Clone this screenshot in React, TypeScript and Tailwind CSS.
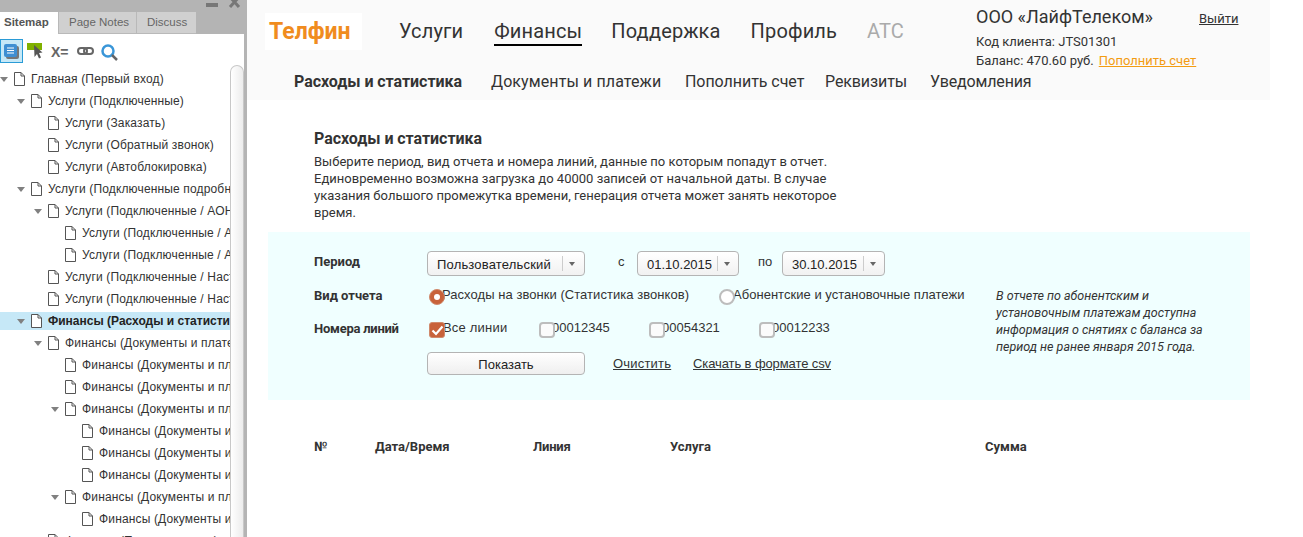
const tree: { depth: number; label: string; arrow?: boolean; active?: boolean }[] = [
  { depth: 0, label: 'Главная (Первый вход)', arrow: true },
  { depth: 1, label: 'Услуги (Подключенные)', arrow: true },
  { depth: 2, label: 'Услуги (Заказать)' },
  { depth: 2, label: 'Услуги (Обратный звонок)' },
  { depth: 2, label: 'Услуги (Автоблокировка)' },
  { depth: 1, label: 'Услуги (Подключенные подробно)', arrow: true },
  { depth: 2, label: 'Услуги (Подключенные / АОН)', arrow: true },
  { depth: 3, label: 'Услуги (Подключенные / АОН / Заказ)' },
  { depth: 3, label: 'Услуги (Подключенные / АОН / Отказ)' },
  { depth: 2, label: 'Услуги (Подключенные / Настройка)' },
  { depth: 2, label: 'Услуги (Подключенные / Настройка 2)' },
  { depth: 1, label: 'Финансы (Расходы и статистика)', arrow: true, active: true },
  { depth: 2, label: 'Финансы (Документы и платежи)', arrow: true },
  { depth: 3, label: 'Финансы (Документы и платежи 1)' },
  { depth: 3, label: 'Финансы (Документы и платежи 2)' },
  { depth: 3, label: 'Финансы (Документы и платежи 3)', arrow: true },
  { depth: 4, label: 'Финансы (Документы и платежи 4)' },
  { depth: 4, label: 'Финансы (Документы и платежи 5)' },
  { depth: 4, label: 'Финансы (Документы и платежи 6)' },
  { depth: 3, label: 'Финансы (Документы и платежи 7)', arrow: true },
  { depth: 4, label: 'Финансы (Документы и платежи 8)' },
  { depth: 2, label: 'Финансы (Пополнить счет)' },
]

const depthPad = ['pl-0', 'pl-[17px]', 'pl-[34px]', 'pl-[51px]', 'pl-[68px]']

function PageIcon() {
  return (
    <svg width="11" height="14" viewBox="0 0 11 14" className="shrink-0">
      <path d="M.5 .5H7L10.5 4V13.5H.5Z" fill="#fff" stroke="#555" strokeWidth="1" />
      <path d="M7 .5V4H10.5" fill="none" stroke="#555" strokeWidth="1" />
    </svg>
  )
}

function TreeRow({ depth, label, arrow, active }: { depth: number; label: string; arrow?: boolean; active?: boolean }) {
  return (
    <div className={`flex h-[18px] mb-1 items-center whitespace-nowrap ${depthPad[depth]} ${active ? 'bg-[#c6e8f7] font-bold text-[#222]' : 'text-[#333] tracking-[0.15px]'}`}>
      <span className="w-[14px] shrink-0 flex">
        {arrow && <span className="w-0 h-0 border-x-[4.5px] border-x-transparent border-t-[5px] border-t-[#808080] mt-[1px]" />}
      </span>
      <PageIcon />
      <span className="ml-[6px]">{label}</span>
    </div>
  )
}

function Sidebar() {
  return (
    <aside className="w-[247px] h-full shrink-0 bg-[#b4b4b4] flex flex-col pr-[3px] font-['Liberation_Sans',sans-serif] text-[12px]">
      <div className="h-[12px] relative shrink-0">
        <span className="absolute left-[206px] top-[3px] w-[12px] h-[4px] bg-[#777]" />
        <svg className="absolute left-[228px] top-0" width="13" height="8" viewBox="0 0 13 8">
          <path d="M2 -3L11 7M11 -3L2 7" stroke="#777" strokeWidth="3" />
        </svg>
      </div>
      <div className="flex h-[22px] shrink-0 text-[11.5px]">
        <div className="w-[58px] bg-white font-bold text-[#555] pl-[4px] leading-[20px]">Sitemap</div>
        <div className="w-[78px] bg-[#d0d0d0] border-l border-b border-[#b9b9b9] text-[#666] pl-[10px] leading-[20px]">Page Notes</div>
        <div className="w-[60px] bg-[#d0d0d0] border-l border-b border-[#b9b9b9] text-[#666] pl-[10px] leading-[20px]">Discuss</div>
      </div>
      <div className="flex-1 min-h-0 bg-white flex flex-col">
        <div className="h-[31px] shrink-0 flex items-start pt-[5px]">
          <div className="w-[23px] h-[24px] bg-[#c6e8f7] border border-[#2a9bd6] flex items-center justify-center">
            <svg width="15" height="15" viewBox="0 0 15 15">
              <rect x="2" y="2" width="13" height="13" rx="2" fill="#777" />
              <rect x="0" y="0" width="13" height="13" rx="2" fill="#3f8fd2" />
              <path d="M3 4H10M3 6.5H10M3 9H10" stroke="#fff" strokeWidth="1" />
            </svg>
          </div>
          <svg width="17" height="17" viewBox="0 0 17 17" className="ml-[4px] mt-[4px]">
            <rect x="0" y="0" width="15" height="7" fill="#80b000" />
            <path d="M7 2L15.5 9.5L12 10L14 14.5L12 15.5L10 11L7.5 14Z" fill="#555" />
          </svg>
          <span className="ml-[7px] mt-[6px] text-[14px] font-bold text-[#666] leading-[15px]">X=</span>
          <svg width="17" height="8" viewBox="0 0 17 8" className="ml-[8px] mt-[8px]">
            <rect x="1" y="1" width="9" height="6" rx="3" fill="none" stroke="#666" strokeWidth="2" />
            <rect x="7" y="1" width="9" height="6" rx="3" fill="none" stroke="#666" strokeWidth="2" />
          </svg>
          <svg width="17" height="17" viewBox="0 0 17 17" className="ml-[7px] mt-[5px]">
            <circle cx="7" cy="7" r="5.5" fill="none" stroke="#3a96d8" strokeWidth="2.5" />
            <path d="M11 11L16 16" stroke="#666" strokeWidth="2.5" />
          </svg>
        </div>
        <div className="flex-1 min-h-0 flex">
          <div className="w-[230px] overflow-hidden pt-[5px] shrink-0">
            {tree.map((row, i) => (
              <TreeRow key={i} {...row} />
            ))}
          </div>
          <div className="flex-1 rounded-t-[7px] border-x border-t border-[#c8c8c8] bg-gradient-to-r from-white to-[#ececec]" />
        </div>
      </div>
    </aside>
  )
}

function Header() {
  return (
    <header className="w-[1023px] h-[100px] bg-[#fafafa] flex font-['Roboto',sans-serif] text-[#333]">
      <div className="w-[729px] shrink-0">
        <div className="flex items-start pt-[13px] pl-[18px]">
          <div className="w-[97px] h-[37px] bg-white flex items-center pl-[4px] text-[23px] font-bold leading-none text-[#f08c1e]">
            Телфин
          </div>
          <nav className="flex text-[20px] leading-[26px] ml-[37px] pt-[5px] gap-[30px] tracking-[0.15px]">
            <span>Услуги</span>
            <span className="border-b-2 border-black h-[28px] ml-[1px] -mr-[1px]">Финансы</span>
            <span>Поддержка</span>
            <span>Профиль</span>
            <span className="text-[#aaa]">АТС</span>
          </nav>
        </div>
        <nav className="flex w-max text-[16px] leading-[20px] pl-[47px] pt-[22px] whitespace-nowrap">
          <span className="font-bold w-[197px] shrink-0 tracking-[-0.05px]">Расходы и статистика</span>
          <span className="w-[194px] shrink-0 tracking-[0.1px]">Документы и платежи</span>
          <span className="w-[140px] shrink-0 tracking-[-0.05px]">Пополнить счет</span>
          <span className="w-[105px] shrink-0 tracking-[-0.1px]">Реквизиты</span>
          <span className="shrink-0 tracking-[-0.15px]">Уведомления</span>
        </nav>
      </div>
      <div className="pt-[7px]">
        <div className="flex items-start">
          <span className="text-[18px] leading-[20px] w-[223px]">ООО «ЛайфТелеком»</span>
          <a className="text-[13px] leading-[20px] underline mt-[2px]">Выйти</a>
        </div>
        <div className="text-[13px] leading-[19px] mt-[3px]">Код клиента: JTS01301</div>
        <div className="text-[13px] leading-[19px]">
          Баланс: 470.60 руб.
          <a className="text-[#f39c12] underline ml-[5px]">Пополнить счет</a>
        </div>
      </div>
    </header>
  )
}

function SelectBox({ value, width, textWidth }: { value: string; width: string; textWidth: string }) {
  return (
    <div className={`${width} h-[25px] rounded-[4px] border border-[#b4b4b4] bg-gradient-to-b from-white to-[#f1f1f1] flex items-center pl-[9px] text-[13px] text-[#222]`}>
      <span className={`${textWidth} pt-[3px]`}>{value}</span>
      <span className="h-[15px] border-l border-[#ccc] ml-[3px] w-[18px] flex items-center justify-center">
        <span className="w-0 h-0 border-x-[3px] border-x-transparent border-t-[4px] border-t-[#666]" />
      </span>
    </div>
  )
}

function Radio({ checked }: { checked?: boolean }) {
  return checked ? (
    <span className="relative z-10 w-[16px] h-[16px] rounded-full shrink-0 bg-[#c8623a] border border-[#d08a6c] flex items-center justify-center">
      <span className="w-[6px] h-[6px] rounded-full bg-white" />
    </span>
  ) : (
    <span className="relative z-10 w-[16px] h-[16px] rounded-full shrink-0 bg-white border-2 border-[#bdbdbd]" />
  )
}

function Check({ checked }: { checked?: boolean }) {
  return checked ? (
    <span className="relative z-10 w-[16px] h-[16px] rounded-[3px] shrink-0 bg-[#c8623a] border border-[#d08a6c] flex items-center justify-center">
      <svg width="13" height="11" viewBox="0 0 13 11">
        <path d="M1.5 5.5L5 9L11.5 1.5" fill="none" stroke="#fff" strokeWidth="2.2" />
      </svg>
    </span>
  ) : (
    <span className="relative z-10 w-[16px] h-[16px] rounded-[4px] shrink-0 bg-[#fbfbfb] border-2 border-[#bdbdbd]" />
  )
}

function FilterPanel() {
  return (
    <section className="w-[982px] h-[168px] bg-[#f0ffff] ml-[21px] mt-[11px] pl-[46px] pt-[19px] flex text-[13px] text-[#333] font-['Liberation_Sans',sans-serif]">
      <div className="w-[682px] shrink-0">
        <div className="flex items-start h-[25px]">
          <span className="w-[113px] font-bold font-['Roboto',sans-serif] leading-[20px] pt-[1px]">Период</span>
          <SelectBox value="Пользовательский" width="w-[158px]" textWidth="w-[122px] tracking-[0.18px]" />
          <span className="ml-[33px] w-[19px] leading-[20px] pt-[1px]">с</span>
          <SelectBox value="01.10.2015" width="w-[102px]" textWidth="w-[67px]" />
          <span className="ml-[19px] w-[24px] leading-[20px] pt-[1px]">по</span>
          <SelectBox value="30.10.2015" width="w-[103px]" textWidth="w-[68px]" />
        </div>
        <div className="flex items-start h-[17px] mt-[13px]">
          <span className="w-[115px] font-bold font-['Roboto',sans-serif] leading-[14px]">Вид отчета</span>
          <Radio checked />
          <span className="-ml-[3px] w-[277px] leading-[12px] whitespace-nowrap tracking-[0.05px]">Расходы на звонки (Статистика звонков)</span>
          <Radio />
          <span className="-ml-[2px] leading-[12px] whitespace-nowrap tracking-[0.03px]">Абонентские и установочные платежи</span>
        </div>
        <div className="flex items-start h-[17px] mt-[16px]">
          <span className="w-[115px] font-bold font-['Roboto',sans-serif] leading-[14px] tracking-[-0.25px]">Номера линий</span>
          <Check checked />
          <span className="-ml-[2px] w-[96px] leading-[12px] tracking-[0.2px]">Все линии</span>
          <Check />
          <span className="-ml-[3px] w-[97px] leading-[12px]">00012345</span>
          <Check />
          <span className="-ml-[3px] w-[97px] leading-[12px]">00054321</span>
          <Check />
          <span className="-ml-[3px] leading-[12px]">00012233</span>
        </div>
        <div className="flex items-center h-[23px] mt-[13px] pl-[113px]">
          <button className="w-[158px] h-[23px] rounded-[4px] border border-[#b4b4b4] bg-gradient-to-b from-white to-[#efefef] text-[#222] pt-[2px]">Показать</button>
          <a className="ml-[28px] w-[80px] underline tracking-[0.2px]">Очистить</a>
          <a className="underline tracking-[-0.1px]">Скачать в формате csv</a>
        </div>
      </div>
      <p className="w-[230px] mt-[36px] italic text-[12.5px] leading-[17px] text-[#333] font-['Roboto',sans-serif]">
        В отчете по абонентским и установочным платежам доступна информация о снятиях с баланса за период не ранее января 2015 года.
      </p>
    </section>
  )
}

export default function App() {
  return (
    <div className="flex w-[1303px] h-[537px] overflow-hidden bg-white">
      <Sidebar />
      <main className="flex-1 min-w-0">
        <Header />
        <div className="pl-[67px] pt-[29px] font-['Roboto',sans-serif] text-[#333]">
          <h1 className="text-[16px] font-bold leading-[20px] tracking-[-0.05px]">Расходы и статистика</h1>
          <p className="w-[530px] text-[13px] leading-[17px] mt-[4px] tracking-[0.01px]">
            Выберите период, вид отчета и номера линий, данные по которым попадут в отчет. Единовременно возможна загрузка до 40000 записей от начальной даты. В случае указания большого промежутка времени, генерация отчета может занять некоторое время.
          </p>
        </div>
        <FilterPanel />
        <div className="flex pl-[67px] pt-[38px] text-[13px] font-bold leading-[17px] text-[#333] font-['Roboto',sans-serif]">
          <span className="w-[61px]">№</span>
          <span className="w-[158px]">Дата/Время</span>
          <span className="w-[137px] tracking-[-0.2px]">Линия</span>
          <span className="w-[315px]">Услуга</span>
          <span>Сумма</span>
        </div>
      </main>
    </div>
  )
}
